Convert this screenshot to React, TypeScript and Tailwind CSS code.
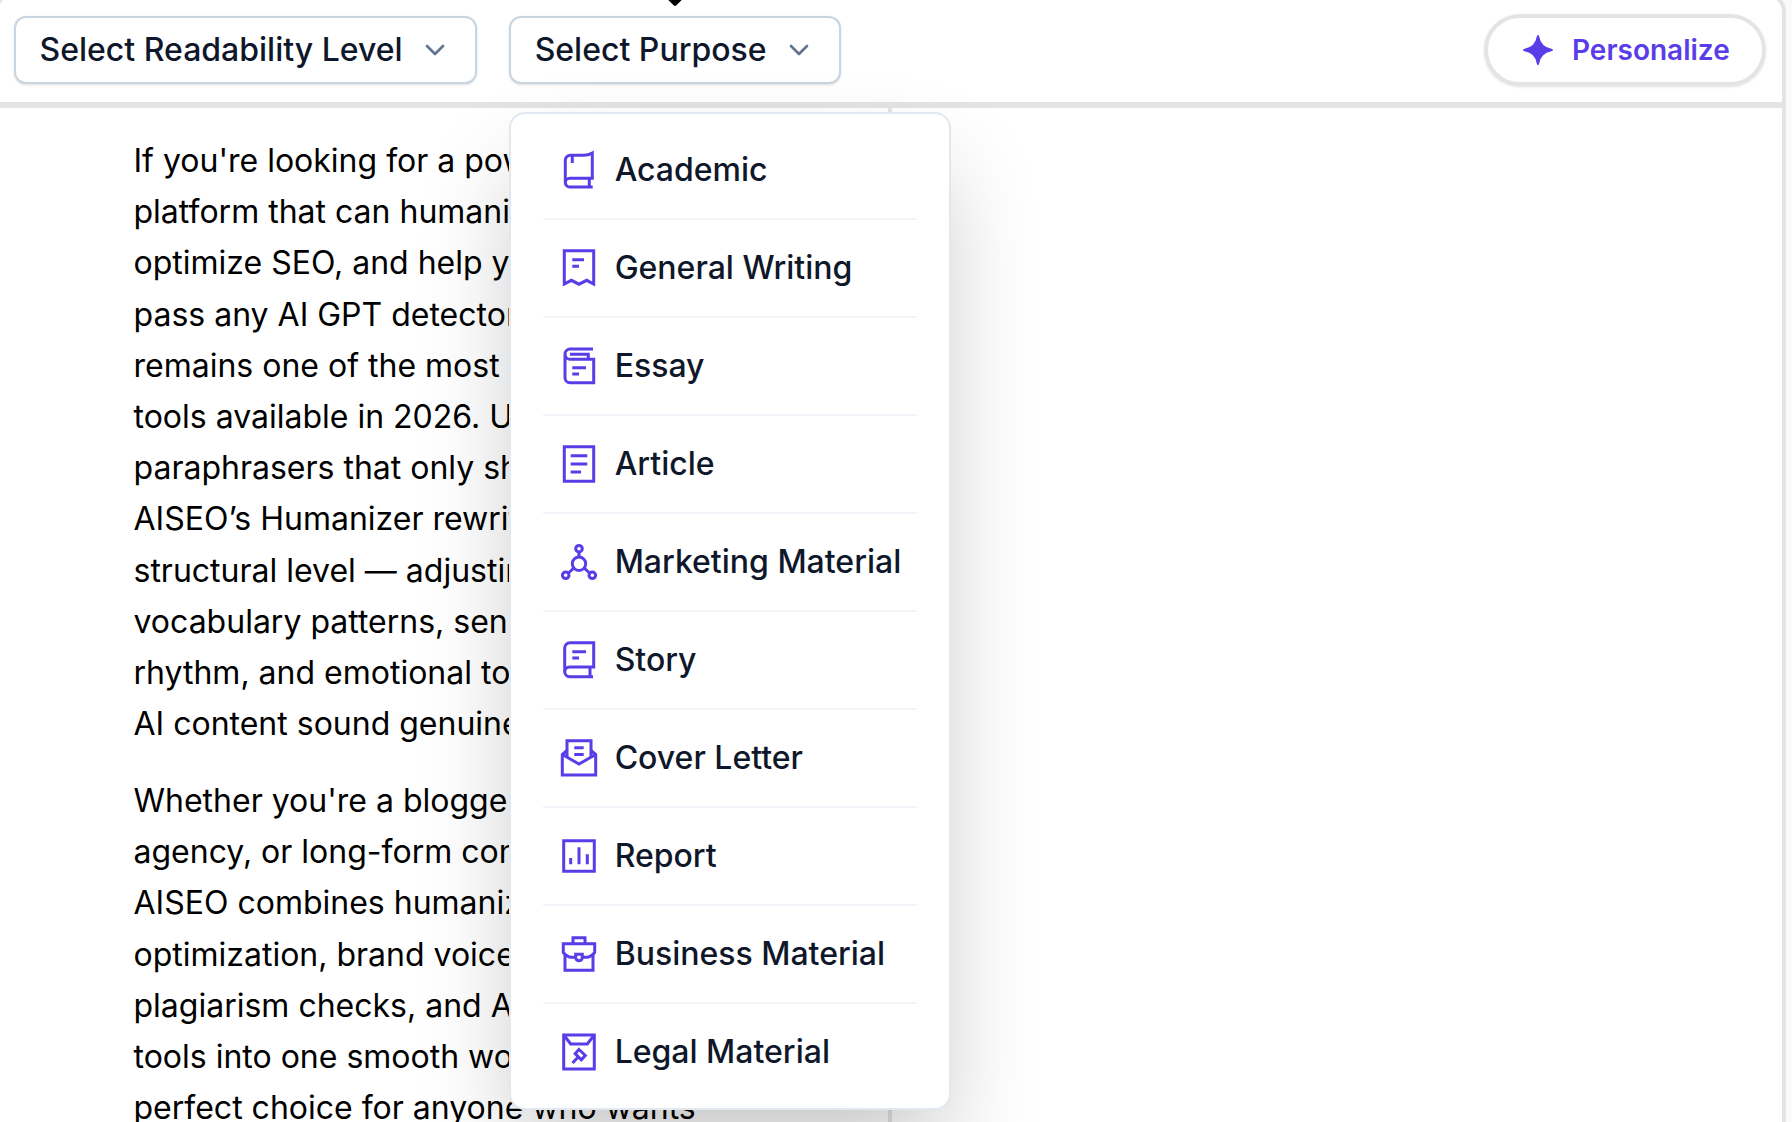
import React, { useState } from "react";
import { ChevronDown } from "lucide-react";

type Purpose = {
  label: string;
  icon: React.ReactNode;
};

const PURPOSES: Purpose[] = [
  {
    label: "Academic",
    icon: (
      <>
        <path d="M6.3 33V10.3a5 5 0 0 1 5-5h13.4q4.6 0 8.6-2.3v25.3H10.7a4.35 4.35 0 0 0 0 8.7H33.7" />
        <path d="M30.3 28.3V37M13.3 5.3V13" />
      </>
    ),
  },
  {
    label: "General Writing",
    icon: (
      <>
        <path d="M5.3 2.7H34.7V36L27.7 32.3 20 36.2 12.3 32.3 5.3 36Z" />
        <path d="M13.3 11.7H25M13.3 18.3H20" />
      </>
    ),
  },
  {
    label: "Essay",
    icon: (
      <>
        <path d="M34 3H11.2a5.15 5.15 0 0 0 0 10.3H34.7V36.7H11a5 5 0 0 1-5-5V8" />
        <path d="M11 8.3H29.3V13.3M13.3 21.7H27M13.3 28H20" />
      </>
    ),
  },
  {
    label: "Article",
    icon: (
      <>
        <path d="M5.3 2.7H34.7V37.3H5.3Z" />
        <path d="M11.7 11.7H28.3M11.7 20H28.3M11.7 28H22" />
      </>
    ),
  },
  {
    label: "Marketing Material",
    icon: (
      <>
        <circle cx="20" cy="6.7" r="3.3" />
        <circle cx="20" cy="21.7" r="6.7" />
        <circle cx="6.7" cy="33.3" r="3.3" />
        <circle cx="33.3" cy="33.3" r="3.3" />
        <path d="M20 10V15M14.8 26.2 9.4 31M25.2 26.2 30.6 31" />
      </>
    ),
  },
  {
    label: "Story",
    icon: (
      <>
        <path d="M5.7 32.5V8a5.3 5.3 0 0 1 5.3-5.3H34.7V27H10.6a4.85 4.85 0 0 0 0 9.7H34" />
        <path d="M31 27V36.7M13.3 11.7H27M13.3 18H20" />
      </>
    ),
  },
  {
    label: "Cover Letter",
    icon: (
      <>
        <path d="M8 19V2.7H32V19" />
        <path d="M8 12.5 3.3 16.5V37H36.7V16.5L32 12.5" />
        <path d="M3.3 16.5 20 26 36.7 16.5M15.3 9.7H24.7M15.3 16.5H24.7" />
      </>
    ),
  },
  {
    label: "Report",
    icon: (
      <>
        <path d="M4.7 4.7H35.3V35.3H4.7Z" />
        <path d="M11.7 22V28.3M20 11.3V28.3M28.3 18.3V28.3" />
      </>
    ),
  },
  {
    label: "Business Material",
    icon: (
      <>
        <path d="M14 9.7V3.7H26V9.7" />
        <path d="M16.7 23.3H12.5Q8 23 4.3 18.5V9.7H35.7V18.5Q32 23 27.5 23.3H23.3" />
        <path d="M16.7 20.3H23.3V23.5a3.3 3.3 0 0 1-6.6 0ZM6 20V36.3H34V20" />
      </>
    ),
  },
  {
    label: "Legal Material",
    icon: (
      <>
        <path d="M4.7 3H35.3V37H4.7Z" />
        <path d="M4.7 3 11.7 12H28.3L35.3 3" />
        <path d="M20 17.5 26.3 23.5 22.3 27.8 16.2 21.6ZM19 25.2 13.5 31" />
      </>
    ),
  },
];

const PARAGRAPHS = [
  [
    "If you're looking for a powerful AI",
    "platform that can humanize text,",
    "optimize SEO, and help you",
    "pass any AI GPT detector, AISEO",
    "remains one of the most popular",
    "tools available in 2026. Unlike",
    "paraphrasers that only shuffle,",
    "AISEO’s Humanizer rewrites at a",
    "structural level — adjusting tone,",
    "vocabulary patterns, sense,",
    "rhythm, and emotional tone so",
    "AI content sound genuinely real.",
  ],
  [
    "Whether you're a blogger, SEO",
    "agency, or long-form content team,",
    "AISEO combines humanization,",
    "optimization, brand voice, and",
    "plagiarism checks, and AI writing",
    "tools into one smooth workflow,",
    "perfect choice for anyone who wants",
  ],
];

function SelectButton({
  label,
  onClick,
}: {
  label: string;
  onClick?: () => void;
}) {
  return (
    <button
      onClick={onClick}
      className="flex h-[68px] items-center gap-[16.5px] whitespace-nowrap rounded-xl border-2 border-slate-300 bg-white pl-[23.5px] pr-6 text-[32px] font-medium text-slate-900 shadow-sm"
    >
      {label}
      <ChevronDown className="size-8 text-slate-500" />
    </button>
  );
}

function PurposeMenu() {
  return (
    <ul className="absolute left-0 top-[96px] z-10 w-[442px] rounded-2xl border-2 border-slate-200 bg-white px-8 py-2 shadow-[0_50px_100px_-12px_rgba(0,0,0,0.23)]">
      {PURPOSES.map((item) => (
        <li
          key={item.label}
          className="flex h-[98px] items-center gap-[15.5px] whitespace-nowrap border-b-2 border-slate-100 px-4 text-[32px] font-medium text-slate-900 last:h-24 last:border-b-0"
        >
          <svg
            viewBox="0 0 40 40"
            className="size-10 shrink-0 text-[#5a3de8]"
            fill="none"
            stroke="currentColor"
            strokeWidth="3"
          >
            {item.icon}
          </svg>
          {item.label}
        </li>
      ))}
    </ul>
  );
}

export default function App() {
  const [isOpen, setIsOpen] = useState(true);

  return (
    <div className="h-screen overflow-hidden bg-[#fafafa] font-['Inter',sans-serif]">
      <div className="-ml-1.5 -mt-2 flex h-[1200px] w-[1792px] flex-col rounded-[20px] border-4 border-[#e4e4e7] bg-white">
        <div className="flex h-28 shrink-0 items-start justify-between border-b-[6px] border-[#e4e4e7] pl-4 pr-4 pt-[18px]">
          <div className="flex gap-8 pt-0.5">
            <SelectButton label="Select Readability Level" />
            <div className="relative">
              {/* tooltip arrow */}
              <div className="absolute -top-[31px] left-[157px] size-[18px] rotate-45 rounded-[2px] bg-black" />
              <SelectButton
                label="Select Purpose"
                onClick={() => setIsOpen(!isOpen)}
              />
              {isOpen && <PurposeMenu />}
            </div>
          </div>
          <button className="flex h-[72px] w-[282px] items-center rounded-full border-4 border-[#e4e4e7] pl-8 text-[28px] font-semibold text-[#5a3de8] shadow-sm">
            <svg
              viewBox="0 0 36 36"
              className="mr-4 size-9"
              fill="currentColor"
            >
              <path d="M18 3q1 0 1.2 1.6Q21 15 31.4 16.8 33 17 33 18t-1.6 1.2Q21 21 19.2 31.4 19 33 18 33t-1.2-1.6Q15 21 4.6 19.2 3 19 3 18t1.6-1.2Q15 15 16.8 4.6 17 3 18 3Z" />
            </svg>
            Personalize
          </button>
        </div>
        <div className="flex flex-1">
          <div className="w-[894px] shrink-0 space-y-[25.6px] border-r-4 border-[#e4e4e7] pl-[135.5px] pt-[27px] text-[32px] leading-[51.2px] text-black">
            {PARAGRAPHS.map((lines, i) => (
              <p key={i} className="whitespace-nowrap">
                {lines.map((line) => (
                  <span key={line} className="block">
                    {line}
                  </span>
                ))}
              </p>
            ))}
          </div>
          <div className="flex-1" />
        </div>
      </div>
    </div>
  );
}
